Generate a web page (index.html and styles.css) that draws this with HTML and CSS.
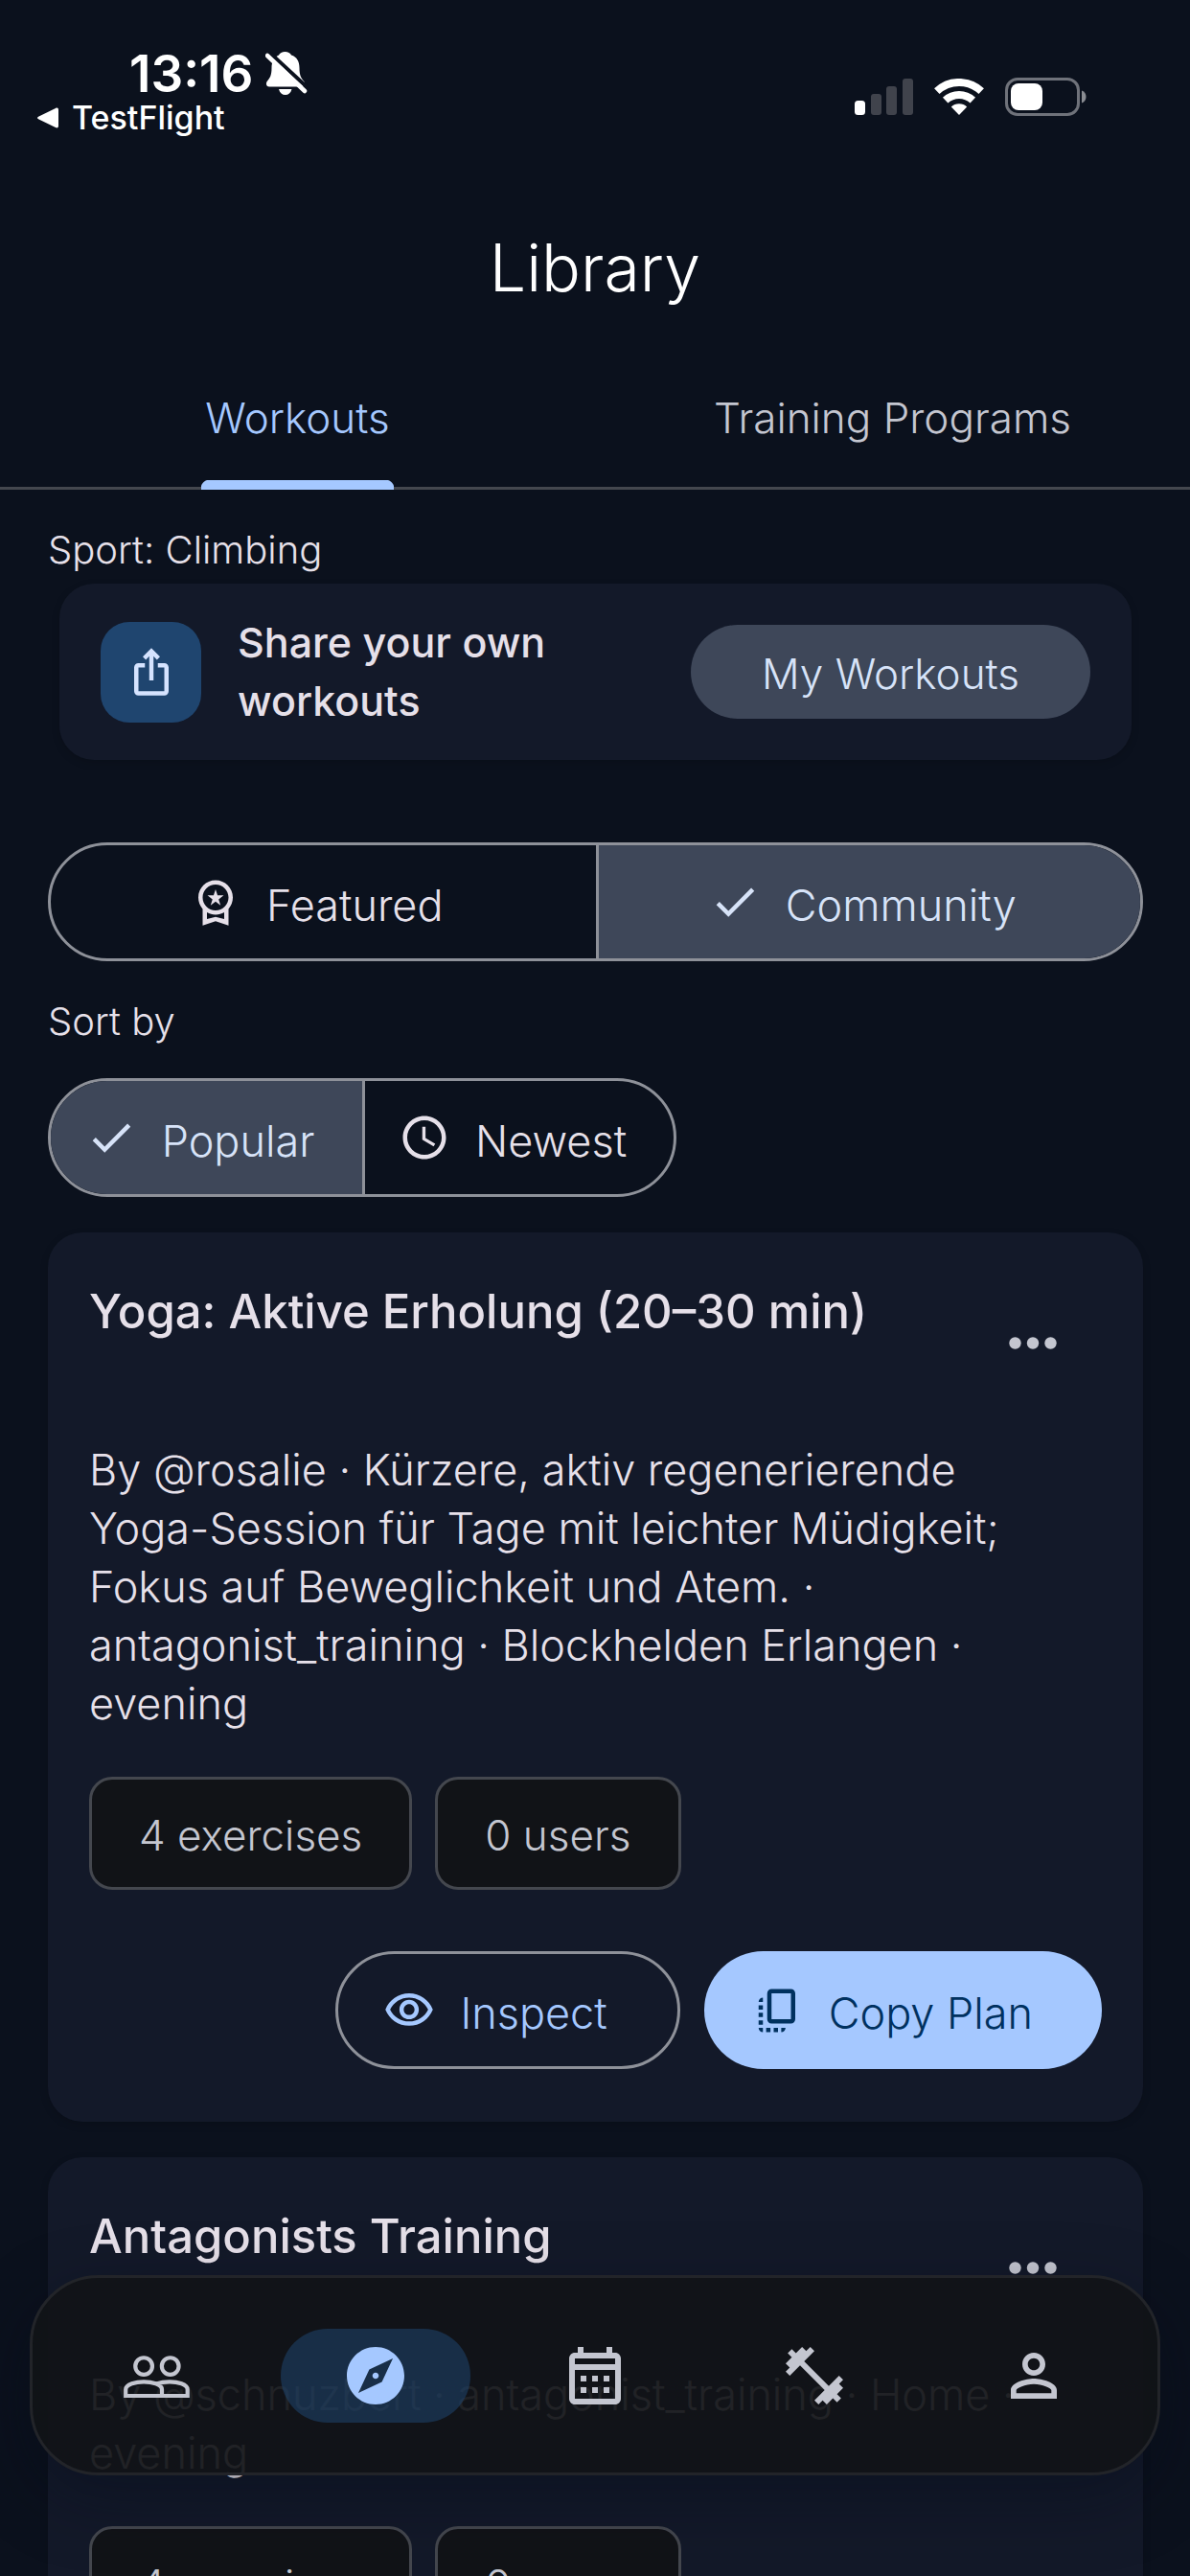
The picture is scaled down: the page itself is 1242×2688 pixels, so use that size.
FILE: index.html
```html
<!DOCTYPE html>
<html lang="en">
<head>
<meta charset="utf-8">
<meta name="viewport" content="width=device-width, initial-scale=1">
<title>Library</title>
<link rel="stylesheet" href="styles.css">
</head>
<body>
<div class="app">
  <div class="status">
    <div class="status-left">
      <div class="clock">13:16
        <svg class="bell" viewBox="0 0 44 46" aria-hidden="true"><path fill="#fff" d="M20.500 0C17.500 0 15 1.500 14 3.500C8.500 6 6.500 11 6.500 17C6.500 25 4.500 27.500 2 30.500C0 33 1 36.500 4 36.500H38C41 36.500 42 33 40 30.500C37.500 27.500 35.500 25 35.500 17C35.500 10 33 5.500 27 3.500C26 1.500 23.500 0 20.500 0zM14 39H27.500C26.500 43 24 45 20.800 45S15 43 14 39z"/><path d="M4.500 1L45 38.500" stroke="#0b111d" stroke-width="4"/><path d="M2 4L41 41" stroke="#fff" stroke-width="4.500" stroke-linecap="round"/></svg>
      </div>
      <a class="back" href="#"><svg viewBox="0 0 22 22" aria-hidden="true"><path fill="#fff" d="M1.500 9.500 19 1c2-1 3 0 3 1.500v17c0 1.500-1 2.500-3 1.500L1.500 12.500c-2-1-2-2 0-3z"/></svg>TestFlight</a>
    </div>
    <div class="status-right">
      <svg class="signal" viewBox="0 0 61 38" aria-hidden="true"><rect y="23" width="11" height="15" rx="3.500" fill="#fff"/><g fill="#40434c"><rect x="17" y="16" width="11" height="22" rx="3"/><rect x="33" y="8" width="11" height="30" rx="3"/><rect x="50" width="11" height="38" rx="3"/></g></svg>
      <svg class="wifi" viewBox="0 0 52 38" aria-hidden="true"><path fill="none" stroke="#fff" stroke-width="8" d="M2.800 13.100A34 34 0 0 1 49.200 13.100M11.700 22.600A21 21 0 0 1 40.300 22.600"/><path fill="#fff" d="M26 38 17.800 29.500A12 12 0 0 1 34.200 29.500z"/></svg>
      <svg class="battery" viewBox="0 0 85 40" aria-hidden="true"><rect x="1.500" y="1.500" width="75" height="37" rx="11.500" fill="none" stroke="#6f727a" stroke-width="3"/><rect x="6" y="6" width="33" height="28" rx="8" fill="#fff"/><path fill="#8a8c92" d="M80 13.500c6 2 6 11 0 13z"/></svg>
    </div>
  </div>

  <h1 class="title">Library</h1>

  <div class="tabs" role="tablist">
    <button class="tab tab-on" role="tab" aria-selected="true"><span>Workouts</span></button>
    <button class="tab" role="tab" aria-selected="false"><span>Training Programs</span></button>
  </div>

  <main class="content">
    <p class="label">Sport: Climbing</p>

    <section class="share">
      <div class="share-icon"><svg class="ic" viewBox="0 0 24 24" aria-hidden="true"><path d="M16 5l-1.420 1.420-1.590-1.590V16h-1.980V4.830L9.420 6.420 8 5l4-4 4 4zm4 5v11c0 1.100-.900 2-2 2H6c-1.110 0-2-.900-2-2V10c0-1.110.890-2 2-2h3v2H6v11h12V10h-3V8h3c1.100 0 2 .890 2 2z"/></svg></div>
      <p class="share-text">Share your own workouts</p>
      <button class="share-btn">My Workouts</button>
    </section>

    <div class="seg seg-wide" role="group" aria-label="Source">
      <button aria-pressed="false"><svg class="ic" viewBox="0 0 24 24" aria-hidden="true"><path d="M9.680 13.690 12 11.930l2.310 1.760-.880-2.850L15.750 9h-2.840L12 6.190 11.090 9H8.250l2.310 1.840-.880 2.850zM20 10c0-4.420-3.580-8-8-8s-8 3.580-8 8c0 2.030.760 3.870 2 5.280V23l6-2 6 2v-7.720c1.240-1.410 2-3.250 2-5.280zm-8-6c3.310 0 6 2.690 6 6s-2.690 6-6 6-6-2.690-6-6 2.690-6 6-6zm0 15-4 1.020v-3.100c1.180.680 2.540 1.080 4 1.080s2.820-.400 4-1.080v3.100L12 19z"/></svg>Featured</button>
      <button aria-pressed="true"><svg class="ic" viewBox="0 0 24 24" aria-hidden="true"><path d="M9 16.170 4.830 12l-1.420 1.410L9 19 21 7l-1.410-1.410z"/></svg>Community</button>
    </div>

    <p class="label" id="sort">Sort by</p>

    <div class="seg" role="group" aria-labelledby="sort">
      <button aria-pressed="true"><svg class="ic" viewBox="0 0 24 24" aria-hidden="true"><path d="M9 16.170 4.830 12l-1.420 1.410L9 19 21 7l-1.410-1.410z"/></svg>Popular</button>
      <button aria-pressed="false"><svg class="ic" viewBox="0 0 24 24" aria-hidden="true"><path d="M11.990 2C6.470 2 2 6.480 2 12s4.470 10 9.990 10C17.520 22 22 17.520 22 12S17.520 2 11.990 2zM12 20c-4.420 0-8-3.580-8-8s3.580-8 8-8 8 3.580 8 8-3.580 8-8 8zm.500-13H11v6l5.250 3.150.750-1.230-4.500-2.670z"/></svg>Newest</button>
    </div>

    <div class="cards">
      <article class="card">
        <header class="card-head">
          <h2>Yoga: Aktive Erholung (20–30 min)</h2>
          <button class="more" aria-label="More"><svg viewBox="0 0 50 13" aria-hidden="true"><circle cx="6.500" cy="6.500" r="6.200"/><circle cx="25" cy="6.500" r="6.200"/><circle cx="43.500" cy="6.500" r="6.200"/></svg></button>
        </header>
        <p class="desc">By @rosalie · Kürzere, aktiv regenerierende Yoga-Session für Tage mit leichter Müdigkeit; Fokus auf Beweglichkeit und Atem. · antagonist_training · Blockhelden Erlangen · evening</p>
        <div class="chips"><span class="chip">4 exercises</span><span class="chip">0 users</span></div>
        <div class="actions">
          <button class="btn btn-line"><svg class="ic" viewBox="0 0 24 24" aria-hidden="true"><path d="M12 6c3.790 0 7.170 2.130 8.820 5.500C19.170 14.870 15.790 17 12 17s-7.170-2.130-8.820-5.500C4.830 8.130 8.210 6 12 6m0-2C7 4 2.730 7.110 1 11.500 2.730 15.890 7 19 12 19s9.270-3.110 11-7.500C21.270 7.110 17 4 12 4zm0 5c1.380 0 2.500 1.120 2.500 2.500S13.380 14 12 14s-2.500-1.120-2.500-2.500S10.620 9 12 9m0-2c-2.480 0-4.500 2.020-4.500 4.500S9.520 16 12 16s4.500-2.020 4.500-4.500S14.480 7 12 7z"/></svg>Inspect</button>
          <button class="btn btn-fill"><svg class="ic" viewBox="0 0 24 24" aria-hidden="true"><path d="M18 2H9c-1.100 0-2 .900-2 2v12c0 1.100.900 2 2 2h9c1.100 0 2-.900 2-2V4c0-1.100-.900-2-2-2zm0 14H9V4h9v12zM3 15v-2h2v2H3zm0-5.500h2v2H3v-2zM10 20h2v2h-2v-2zm-7-1.500v-2h2v2H3zM5 22c-1.100 0-2-.900-2-2h2v2zm3.500 0h-2v-2h2v2zm5 0v-2h2c0 1.100-.900 2-2 2zM5 6v2H3c0-1.100.900-2 2-2z"/></svg>Copy Plan</button>
        </div>
      </article>

      <article class="card">
        <header class="card-head">
          <h2>Antagonists Training</h2>
          <button class="more" aria-label="More"><svg viewBox="0 0 50 13" aria-hidden="true"><circle cx="6.500" cy="6.500" r="6.200"/><circle cx="25" cy="6.500" r="6.200"/><circle cx="43.500" cy="6.500" r="6.200"/></svg></button>
        </header>
        <p class="desc">By @schnuzbert · antagonist_training · Home · evening</p>
        <div class="chips"><span class="chip">4 exercises</span><span class="chip">0 users</span></div>
      </article>
    </div>
  </main>

  <nav class="nav" aria-label="Main">
    <a href="#" aria-label="Friends"><svg class="ic" viewBox="0 0 24 24" aria-hidden="true"><g fill="none" stroke="currentColor" stroke-width="1.400"><circle cx="7.700" cy="8.700" r="2.950"/><circle cx="16.900" cy="8.700" r="2.950"/><path d="M1.400 19V16.800C1.400 15 5 14.100 7.700 14.100S14 15 14 16.800V19zM12 14.800C13.500 14.300 15.300 14.100 16.700 14.100C19.400 14.100 22.900 15 22.900 16.800V19H14"/></g></svg></a>
    <a href="#" class="on" aria-label="Explore" aria-current="page"><svg class="ic" viewBox="0 0 24 24" aria-hidden="true"><path d="M12 10.900c-.610 0-1.100.490-1.100 1.100s.490 1.100 1.100 1.100c.610 0 1.100-.490 1.100-1.100s-.490-1.100-1.100-1.100zM12 2C6.480 2 2 6.480 2 12s4.480 10 10 10 10-4.480 10-10S17.520 2 12 2zm2.190 12.190L6 18l3.810-8.190L18 6l-3.810 8.190z"/></svg></a>
    <a href="#" aria-label="Calendar"><svg class="ic" viewBox="0 0 24 24" aria-hidden="true"><path d="M19 4h-1V2h-2v2H8V2H6v2H5c-1.110 0-1.990.900-1.990 2L3 20c0 1.100.890 2 2 2h14c1.100 0 2-.900 2-2V6c0-1.100-.900-2-2-2zm0 16H5V10h14v10zm0-12H5V6h14v2zM9 14H7v-2h2v2zm4 0h-2v-2h2v2zm4 0h-2v-2h2v2zm-8 4H7v-2h2v2zm4 0h-2v-2h2v2zm4 0h-2v-2h2v2z"/></svg></a>
    <a href="#" aria-label="Training"><svg class="ic" viewBox="0 0 24 24" aria-hidden="true"><path d="M20.570 14.860L22 13.430 20.570 12 17 15.570 8.430 7 12 3.430 10.570 2 9.140 3.430 7.710 2 5.570 4.140 4.140 2.710 2.710 4.140l1.430 1.430L2 7.710l1.430 1.430L2 10.570 3.430 12 7 8.430 15.570 17 12 20.570 13.430 22l1.430-1.430L16.290 22l2.140-2.140 1.430 1.430 1.430-1.430-1.430-1.430L22 16.290z"/></svg></a>
    <a href="#" aria-label="Profile"><svg class="ic" viewBox="0 0 24 24" aria-hidden="true"><path d="M12 5.900c1.160 0 2.100.940 2.100 2.100s-.940 2.100-2.100 2.100S9.900 9.160 9.900 8s.940-2.100 2.100-2.100m0 9c2.970 0 6.100 1.460 6.100 2.100v1.100H5.900V17c0-.640 3.130-2.100 6.100-2.100M12 4C9.790 4 8 5.790 8 8s1.790 4 4 4 4-1.790 4-4-1.790-4-4-4zm0 9c-2.670 0-8 1.340-8 4v3h16v-3c0-2.660-5.330-4-8-4z"/></svg></a>
  </nav>
</div>
</body>
</html>
```
FILE: styles.css
```css
* {
  box-sizing: border-box;
}

body {
  margin: 0;
  background: #0b111d;
  color: #e6e0e9;
  font-family: Inter, "Noto Sans", sans-serif;
  font-size: 45px;
  font-weight: 300;
}

h1, h2, p {
  margin: 0;
}

button {
  border: 0;
  padding: 0;
  background: none;
  color: inherit;
  font: inherit;
  cursor: pointer;
}

a {
  color: inherit;
  text-decoration: none;
}

svg {
  display: block;
  flex: none;
}

.ic {
  width: 54px;
  height: 54px;
  fill: currentColor;
}

.app {
  position: relative;
  display: flex;
  flex-direction: column;
  height: 100vh;
  overflow: hidden;
}

/* Status bar */
.status {
  display: flex;
  justify-content: space-between;
  padding: 49px 108px 0 39px;
  color: #fff;
}

.clock {
  display: flex;
  align-items: center;
  gap: 13px;
  padding-left: 96px;
  font-size: 53px;
  font-weight: 600;
  line-height: 56px;
}

.bell {
  width: 44px;
  height: 46px;
}

.back {
  display: flex;
  align-items: center;
  gap: 14px;
  font-size: 34px;
  font-weight: 500;
  line-height: 36px;
}

.back svg {
  width: 22px;
  height: 22px;
}

.status-right {
  display: flex;
  align-items: center;
  gap: 22px;
  height: 103px;
}

.signal {
  width: 61px;
  height: 38px;
}

.wifi {
  width: 52px;
  height: 38px;
}

.battery {
  width: 85px;
  height: 40px;
}

.title {
  margin: 83px 0 37px;
  color: #fff;
  font-size: 68px;
  font-weight: 300;
  line-height: 88px;
  text-align: center;
}

/* Tabs */
.tabs {
  display: grid;
  grid-template-columns: 1fr 1fr;
  flex: none;
  font-size: 44px;
  background: linear-gradient(#44474e, #44474e) 0 100% / 100% 3px no-repeat;
}

.tab {
  display: flex;
  justify-content: center;
  color: #c4c6d0;
  line-height: 60px;
}

.tab span {
  padding: 46px 4px 45px;
}

.tab-on {
  color: #a5c8ff;
}

.tab-on span {
  background: radial-gradient(circle at 9px 9px, #a5c8ff 9px, transparent 10px) 0 100% / 9px 10px no-repeat,
    radial-gradient(circle at 0 9px, #a5c8ff 9px, transparent 10px) 100% 100% / 9px 10px no-repeat,
    linear-gradient(90deg, transparent 9px, #a5c8ff 9px calc(100% - 9px), transparent 0) 0 100% / 100% 10px no-repeat;
}

/* Scrolling content */
.content {
  flex: 1;
  min-height: 0;
  overflow-y: auto;
  scrollbar-width: none;
  padding: 39px 49px 0 50px;
}

.label {
  font-size: 40px;
  line-height: 48px;
}

.share {
  display: flex;
  align-items: center;
  gap: 38px;
  margin: 11px 12px 86px;
  padding: 31px 43px;
  border-radius: 36px;
  background: #131929;
  box-shadow: 0 3px 9px rgba(0, 0, 0, .15);
}

.share-icon {
  display: grid;
  place-items: center;
  flex: none;
  width: 105px;
  height: 105px;
  border-radius: 30px;
  background: #1f456f;
  color: #d5e3ff;
}

.share-text {
  flex: 1;
  padding-right: 90px;
  font-weight: 500;
  font-size: 43px;
  line-height: 61px;
}

.share-btn {
  flex: none;
  width: 417px;
  height: 98px;
  padding-top: 4px;
  border-radius: 49px;
  background: #3e4759;
  color: #d7e3f8;
  font-size: 44px;
}

/* Segmented buttons */
.seg {
  display: inline-grid;
  grid-template-columns: 1fr 1fr;
  height: 124px;
  border: 3px solid #8e9199;
  border-radius: 62px;
  overflow: hidden;
}

.seg-wide {
  display: grid;
  margin-bottom: 39px;
}

.seg button {
  display: flex;
  align-items: center;
  justify-content: center;
  gap: 26px;
  padding: 6px 49px 0 35px;
}

.seg button + button {
  border-left: 3px solid #8e9199;
}

.seg button[aria-pressed="true"] {
  background: #3e4759;
  color: #d7e3f8;
}

/* Labels sit slightly below the icon's centre line */
.seg .ic,
.btn .ic {
  margin-bottom: 6px;
}

#sort {
  margin-bottom: 35px;
}

/* Workout cards */
.cards {
  display: grid;
  gap: 37px;
  margin-top: 37px;
}

.card {
  padding: 43px 43px 55px;
  border-radius: 36px;
  background: #131929;
  box-shadow: 0 3px 9px rgba(0, 0, 0, .15);
}

.card-head {
  display: flex;
  justify-content: space-between;
  margin-bottom: 30px;
}

.card-head h2 {
  padding-top: 8px;
  font-size: 49px;
  font-weight: 500;
  line-height: 64px;
}

.more {
  display: grid;
  place-items: center;
  flex: none;
  width: 144px;
  height: 144px;
  fill: #c4c6d0;
}

.more svg {
  width: 50px;
  height: 13px;
}

.desc {
  padding-right: 40px;
  line-height: 61px;
}

.chips {
  display: flex;
  gap: 24px;
  margin-top: 46px;
}

.chip {
  height: 118px;
  padding: 0 49px;
  border: 3px solid #44474e;
  border-radius: 24px;
  background: #111317;
  color: #c4c6d0;
  font-size: 44px;
  line-height: 117px;
}

.actions {
  display: flex;
  justify-content: flex-end;
  gap: 25px;
  margin-top: 64px;
}

.btn {
  display: flex;
  align-items: center;
  gap: 26px;
  height: 123px;
  padding: 6px 72px 0 50px;
  border-radius: 62px;
}

.btn-line {
  border: 3px solid #8e9199;
  padding: 6px 73px 0 47px;
  color: #a5c8ff;
}

.btn-fill {
  background: #a5c8ff;
  color: #00315f;
}

/* Floating navigation */
.nav {
  position: absolute;
  right: 31px;
  bottom: 105px;
  left: 31px;
  display: grid;
  grid-template-columns: repeat(5, 1fr);
  place-items: center;
  height: 209px;
  padding: 0 15px;
  border: 3px solid #222429;
  border-radius: 72px;
  background: rgba(17, 19, 23, .93);
  box-shadow: 0 24px 72px rgba(0, 8, 24, .35);
  color: #c4c6d0;
}

.nav a {
  display: grid;
  place-items: center;
  width: 198px;
  height: 98px;
  border-radius: 49px;
}

.nav .ic {
  width: 72px;
  height: 72px;
}

.nav .on {
  background: rgba(31, 69, 111, .55);
  color: #a5c8ff;
}
```
